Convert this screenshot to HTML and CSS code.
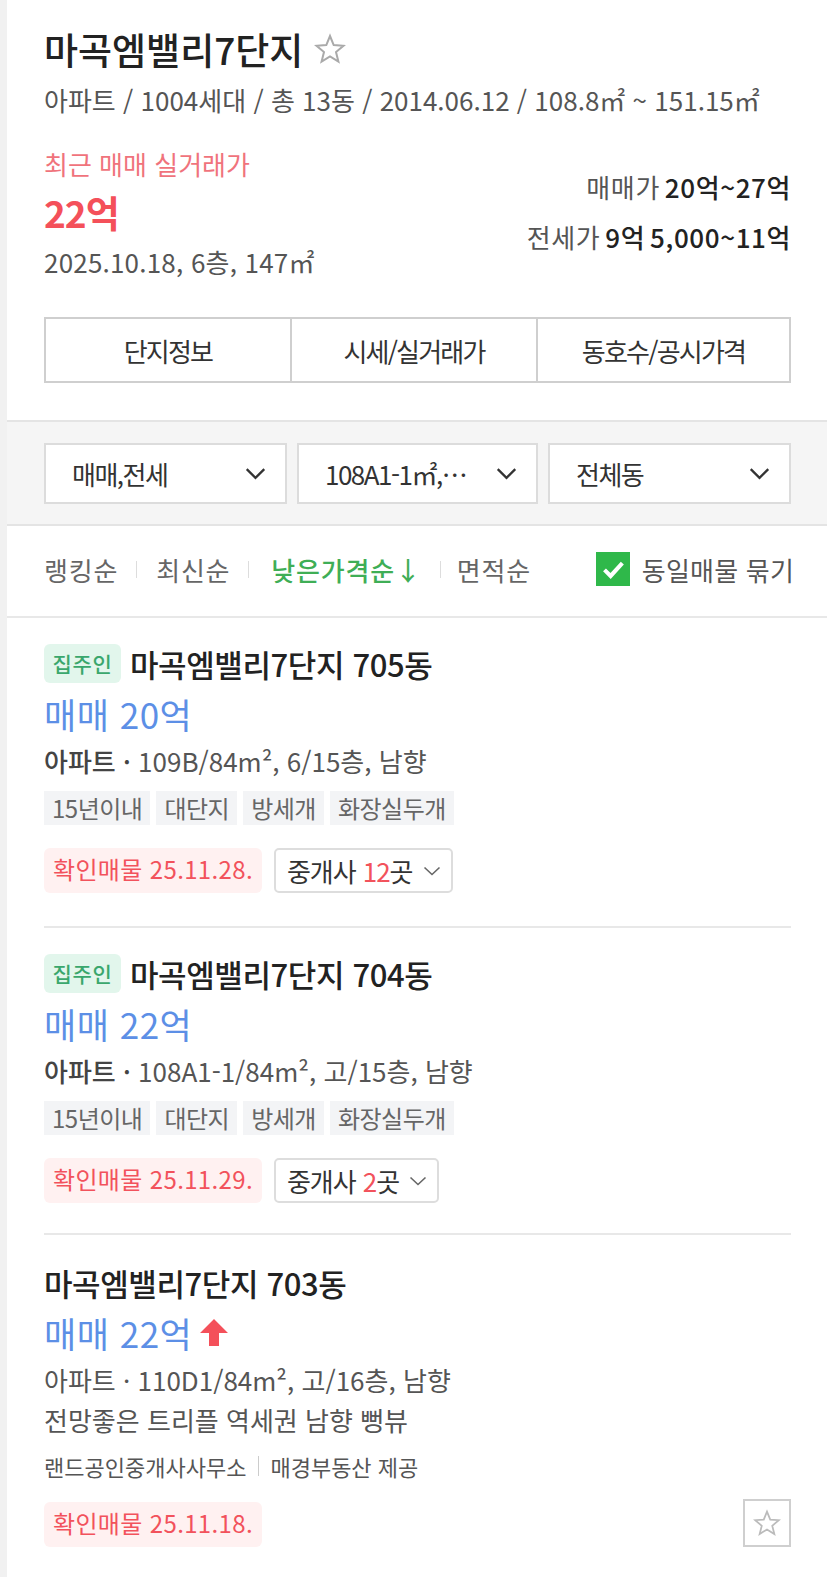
FILE: index.html
```html
<!DOCTYPE html>
<html lang="ko">
<head>
    <meta charset="UTF-8">
    <title>마곡엠밸리7단지</title>
    <link rel="stylesheet" href="styles.css">
</head>
<body>
    <div class="panel">
        <!-- 단지 요약 -->
        <div class="summary">
            <div class="title-row">
                <h2 class="complex-name">마곡엠밸리7단지</h2>
                <svg class="title-star" viewBox="0 0 32 32"><path d="M16 3l3.7 9.1 9.8.7-7.5 6.3 2.4 9.5-8.4-5.2-8.4 5.2 2.4-9.5-7.5-6.3 9.8-.7z"/></svg>
            </div>
            <p class="complex-meta">아파트 / 1004세대 / 총 13동 / 2014.06.12 / 108.8㎡ ~ 151.15㎡</p>
            <div class="price-row">
                <div class="recent">
                    <div class="recent-label">최근 매매 실거래가</div>
                    <div class="recent-price">22억</div>
                    <div class="recent-date">2025.10.18, 6층, 147㎡</div>
                </div>
                <div class="range">
                    <div class="range-line">매매가 <strong>20억~27억</strong></div>
                    <div class="range-line">전세가 <strong>9억 5,000~11억</strong></div>
                </div>
            </div>
            <div class="tabs">
                <a class="tab tab-first">단지정보</a>
                <a class="tab">시세/실거래가</a>
                <a class="tab">동호수/공시가격</a>
            </div>
        </div>

        <!-- 필터 -->
        <div class="filters">
            <div class="select"><span>매매,전세</span><svg class="chev" viewBox="0 0 24 14"><path d="M2 2l10 10L22 2"/></svg></div>
            <div class="select"><span>108A1-1㎡,…</span><svg class="chev" viewBox="0 0 24 14"><path d="M2 2l10 10L22 2"/></svg></div>
            <div class="select"><span>전체동</span><svg class="chev" viewBox="0 0 24 14"><path d="M2 2l10 10L22 2"/></svg></div>
        </div>

        <!-- 정렬 -->
        <div class="sort">
            <a class="sort-item">랭킹순</a>
            <a class="sort-item">최신순</a>
            <a class="sort-item sort-on">낮은가격순↓</a>
            <a class="sort-item">면적순</a>
            <label class="group-check">
                <span class="check-box"><svg viewBox="0 0 20 20"><path d="M5 10.5l3.6 3.6L15.5 6.5"/></svg></span>
                동일매물 묶기
            </label>
        </div>

        <!-- 매물 목록 -->
        <div class="item">
            <div class="item-title"><span class="owner">집주인</span>마곡엠밸리7단지 705동</div>
            <div class="item-price">매매 20억</div>
            <div class="item-spec"><b>아파트 ·</b> 109B/84m², 6/15층, 남향</div>
            <div class="tags"><span>15년이내</span><span>대단지</span><span>방세개</span><span>화장실두개</span></div>
            <div class="item-foot">
                <span class="confirm">확인매물 25.11.28.</span>
                <span class="agents">중개사 <em>12</em>곳<svg class="agents-chev" viewBox="0 0 18 10"><path d="M1.5 1.5L9 8.5l7.5-7"/></svg></span>
            </div>
        </div>

        <div class="item">
            <div class="item-title"><span class="owner">집주인</span>마곡엠밸리7단지 704동</div>
            <div class="item-price">매매 22억</div>
            <div class="item-spec"><b>아파트 ·</b> 108A1-1/84m², 고/15층, 남향</div>
            <div class="tags"><span>15년이내</span><span>대단지</span><span>방세개</span><span>화장실두개</span></div>
            <div class="item-foot">
                <span class="confirm">확인매물 25.11.29.</span>
                <span class="agents">중개사 <em>2</em>곳<svg class="agents-chev" viewBox="0 0 18 10"><path d="M1.5 1.5L9 8.5l7.5-7"/></svg></span>
            </div>
        </div>

        <div class="item item-last">
            <div class="item-title">마곡엠밸리7단지 703동</div>
            <div class="item-price">매매 22억<svg class="up-arrow" viewBox="0 0 28 28"><path d="M14 1L28 15H19V28H9V15H0z"/></svg></div>
            <div class="item-spec">아파트 · 110D1/84m², 고/16층, 남향</div>
            <div class="item-desc">전망좋은 트리플 역세권 남향 뻥뷰</div>
            <div class="item-source"><span>랜드공인중개사사무소</span><span>매경부동산 제공</span></div>
            <div class="item-foot">
                <span class="confirm">확인매물 25.11.18.</span>
                <button class="fav"><svg viewBox="0 0 32 32"><path d="M16 3l3.7 9.1 9.8.7-7.5 6.3 2.4 9.5-8.4-5.2-8.4 5.2 2.4-9.5-7.5-6.3 9.8-.7z"/></svg></button>
            </div>
        </div>
    </div>
</body>
</html>
```

FILE: styles.css
```css
* {
    box-sizing: border-box;
}

body {
    margin: 0;
    background-color: #fff;
    font-family: "Noto Sans CJK KR", "Noto Sans", sans-serif;
    color: #333;
}

.panel {
    width: 827px;
    min-height: 1577px;
    border-left: 7px solid #f1f1f1;
}

/* 단지 요약 */
.summary {
    padding: 24px 36px 0 37px;
    height: 422px;
    border-bottom: 2px solid #e4e4e4;
}

.title-row {
    display: flex;
    align-items: center;
    height: 50px;
}

.complex-name {
    margin: 0;
    font-size: 37px;
    font-weight: 500;
    line-height: 50px;
    color: #222;
}

.title-star {
    width: 32px;
    height: 32px;
    margin-left: 11px;
    fill: none;
    stroke: #aaa;
    stroke-width: 2;
}

.complex-meta {
    margin: 8px 0 0;
    font-size: 26px;
    line-height: 36px;
    color: #555;
}

.price-row {
    display: flex;
    justify-content: space-between;
    margin-top: 28px;
}

.recent-label {
    font-size: 26px;
    line-height: 36px;
    color: #f0737c;
}

.recent-price {
    margin-top: 5px;
    font-size: 37px;
    font-weight: 700;
    line-height: 50px;
    letter-spacing: -1px;
    color: #f4505a;
}

.recent-date {
    margin-top: 7px;
    font-size: 26px;
    line-height: 36px;
    letter-spacing: 0.2px;
    color: #555;
}

.range {
    padding-top: 16px;
    text-align: right;
}

.range-line {
    font-size: 26px;
    line-height: 50px;
    letter-spacing: 0.6px;
    word-spacing: -3px;
    color: #555;
}

.range-line strong {
    font-weight: 500;
    color: #222;
}

.tabs {
    display: grid;
    grid-template-columns: 244px 246px 1fr;
    height: 66px;
    margin-top: 37px;
    border: 2px solid #cfcfcf;
}

.tab {
    display: flex;
    align-items: center;
    justify-content: center;
    font-size: 26px;
    letter-spacing: -1.8px;
    color: #333;
    border-left: 2px solid #cfcfcf;
}

.tab-first {
    border-left: none;
}

/* 필터 */
.filters {
    display: grid;
    grid-template-columns: 243px 241px 1fr;
    gap: 10px;
    height: 104px;
    padding: 21px 36px 0 37px;
    background-color: #f5f5f5;
    border-bottom: 2px solid #e4e4e4;
}

.select {
    display: flex;
    align-items: center;
    justify-content: space-between;
    height: 61px;
    padding: 0 19px 0 26px;
    background-color: #fff;
    border: 2px solid #dcdcdc;
    font-size: 26px;
    letter-spacing: -1.5px;
    color: #333;
}

.chev {
    flex: none;
    width: 21px;
    height: 13px;
    fill: none;
    stroke: #333;
    stroke-width: 2.6;
}

/* 정렬 */
.sort {
    display: flex;
    align-items: center;
    height: 92px;
    padding: 0 33px 4px 37px;
    border-bottom: 2px solid #e8e8e8;
    font-size: 26px;
    letter-spacing: 0.8px;
    color: #666;
}

.sort-item {
    padding-right: 19px;
    margin-right: 19px;
    position: relative;
}

.sort-item::after {
    content: "";
    position: absolute;
    right: 0;
    top: 10px;
    bottom: 10px;
    width: 1px;
    background-color: #ddd;
}

.sort-item:nth-child(4)::after {
    display: none;
}

.sort-on {
    margin-left: 3px;
    margin-right: 16px;
    color: #3fae56;
    font-weight: 500;
}

.group-check {
    margin-left: auto;
    display: flex;
    align-items: center;
    gap: 12px;
    letter-spacing: 0.2px;
    color: #555;
}

.check-box {
    display: block;
    width: 34px;
    height: 34px;
    background-color: #2fb84a;
}

.check-box svg {
    display: block;
    fill: none;
    stroke: #fff;
    stroke-width: 2.4;
}

/* 매물 */
.item {
    margin: 0 36px 0 37px;
    padding-top: 24px;
    height: 310px;
    border-bottom: 2px solid #e8e8e8;
}

.item + .item {
    height: 307px;
}

.item-title {
    display: flex;
    align-items: center;
    height: 42px;
    font-size: 31px;
    font-weight: 500;
    letter-spacing: -0.4px;
    color: #222;
}

.owner {
    width: 77px;
    height: 39px;
    margin-right: 9px;
    display: flex;
    align-items: center;
    justify-content: center;
    border-radius: 6px;
    background-color: #e2f6ec;
    font-size: 21px;
    letter-spacing: 0.7px;
    color: #3aa76d;
}

.item-price {
    display: flex;
    align-items: center;
    margin-top: 6px;
    height: 46px;
    font-size: 35px;
    letter-spacing: 0.5px;
    color: #5c8fe6;
}

.up-arrow {
    width: 28px;
    height: 28px;
    margin-left: 8px;
    fill: #f4505a;
}

.item-spec {
    margin-top: 5px;
    font-size: 26px;
    line-height: 40px;
    color: #555;
}

.item-spec b {
    font-weight: 500;
    color: #444;
}

.tags {
    display: flex;
    gap: 6px;
    margin-top: 10px;
}

.tags span {
    height: 34px;
    padding: 0 8px;
    background-color: #f3f4f6;
    font-size: 24px;
    line-height: 33px;
    letter-spacing: -0.5px;
    color: #666;
}

.item-foot {
    display: flex;
    align-items: center;
    gap: 12px;
    margin-top: 23px;
}

.confirm {
    height: 45px;
    padding: 0 9px;
    border-radius: 6px;
    background-color: #fff1f1;
    font-size: 24px;
    line-height: 42px;
    letter-spacing: 0.35px;
    color: #f2525c;
}

.agents {
    display: flex;
    align-items: center;
    height: 45px;
    padding: 0 10px 0 11px;
    border: 2px solid #ddd;
    border-radius: 5px;
    font-size: 26px;
    letter-spacing: -1px;
    color: #333;
}

.agents em {
    font-style: normal;
    margin-left: 7px;
    color: #f2525c;
}

.agents-chev {
    width: 18px;
    height: 10px;
    margin-left: 10px;
    fill: none;
    stroke: #666;
    stroke-width: 1.6;
}

/* 마지막 매물 */
.item.item-last {
    height: auto;
    padding-top: 26px;
    border-bottom: none;
}

.item-desc {
    margin-top: 1px;
    font-size: 26px;
    line-height: 38px;
    color: #555;
}

.item-source {
    display: flex;
    margin-top: 9px;
    font-size: 22px;
    line-height: 36px;
    color: #555;
}

.item-source span + span {
    margin-left: 12px;
    padding-left: 12px;
    background: linear-gradient(#ccc, #ccc) left center / 1px 20px no-repeat;
}

.item-last .item-foot {
    justify-content: space-between;
    align-items: flex-start;
    margin-top: 18px;
}

.fav {
    width: 48px;
    height: 48px;
    margin-top: -3px;
    padding: 8px;
    background-color: #fff;
    border: 2px solid #cfcfcf;
}

.fav svg {
    display: block;
    fill: none;
    stroke: #bbb;
    stroke-width: 2;
}
```
